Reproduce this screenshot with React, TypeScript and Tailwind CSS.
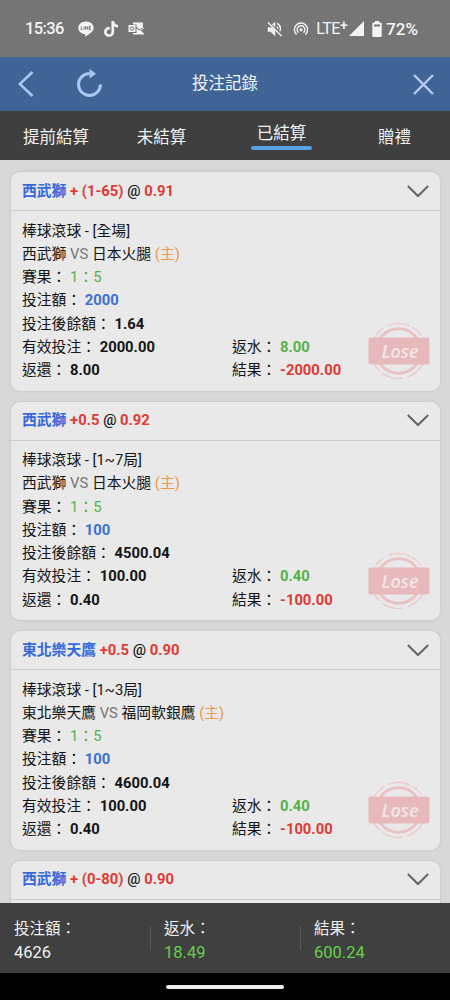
import React from 'react';
import { FaTiktok } from 'react-icons/fa6';

interface BetDetail {
  scope: string;
  away: string;
  amount: string;
  balance: string;
  valid: string;
  returned: string;
  rebate: string;
  result: string;
}

interface Bet {
  team: string;
  line: string;
  odds: string;
  detail?: BetDetail;
}

const bets: Bet[] = [
  {
    team: '西武獅', line: '+ (1-65)', odds: '0.91',
    detail: {
      scope: '全場', away: '日本火腿', amount: '2000', balance: '1.64',
      valid: '2000.00', returned: '8.00', rebate: '8.00', result: '-2000.00'
    }
  },
  {
    team: '西武獅', line: '+0.5', odds: '0.92',
    detail: {
      scope: '1~7局', away: '日本火腿', amount: '100', balance: '4500.04',
      valid: '100.00', returned: '0.40', rebate: '0.40', result: '-100.00'
    }
  },
  {
    team: '東北樂天鷹', line: '+0.5', odds: '0.90',
    detail: {
      scope: '1~3局', away: '福岡軟銀鷹', amount: '100', balance: '4600.04',
      valid: '100.00', returned: '0.40', rebate: '0.40', result: '-100.00'
    }
  },
  { team: '西武獅', line: '+ (0-80)', odds: '0.90' }
];

const StatusBar: React.FC = () => (
  <div className="h-[57px] shrink-0 bg-[#757575] flex items-center justify-between pl-[25px] pr-[32px] text-[#f4f4f4]">
    <div className="flex items-center">
      <span className="w-[53px] text-[16.500px] leading-5 font-medium tracking-[-0.600px]">15:36</span>
      {/* LINE */}
      <svg width="16" height="16" viewBox="0 0 16 16">
        <path d="M8 .5C3.700.5.3 3.300.3 6.900c0 3.100 2.800 5.700 6.400 6.200.8.2.3 1.300.3 2.400 1-.3 5.100-2.800 7-5 1.200-1.200 1.700-2.300 1.700-3.600C15.700 3.300 12.300.5 8 .5z" fill="currentColor" />
        <path d="M3.300 5.300v3.300h1.500M6.200 5.300v3.300M7.700 8.600V5.300l2 3.300V5.300M13 5.300h-1.700v3.300H13M11.300 7H13" fill="none" stroke="#757575" strokeWidth=".9" />
      </svg>
      <FaTiktok className="ml-[9px]" size={16} />
      {/* Outlook */}
      <svg className="ml-[9px]" width="17" height="14" viewBox="0 0 17 14">
        <path d="M5 .5h10v4.700l-3.500 2.300L8.500 5V2.500H5zM.5 3h7v7h-7zM8.500 6.500l3 2 4.500-3v1l-3.300 2 3.300 3v1H5v-1.500h3.500z" fill="currentColor" />
        <circle cx="4" cy="6.500" r="1.700" fill="none" stroke="#757575" strokeWidth="1" />
      </svg>
    </div>
    <div className="flex items-center">
      {/* muted */}
      <svg width="16" height="16" viewBox="0 0 16 16" fill="none" stroke="currentColor" strokeWidth="1.400">
        <path d="M1.500 6v4h2.300l3.700 3.500V9M5.500 4l2-1.700v3.500M1 1.500l13.500 13.500M9.800 5.500c.7.500 1 1.300 1 2.200M10 2.500c2 .8 3.400 3 3.400 5.200 0 1-.2 1.800-.6 2.600" />
        <path d="M2 6.500h3l2 2v4l-3-3H2z" fill="currentColor" stroke="none" />
      </svg>
      {/* hotspot */}
      <svg className="ml-[10px]" width="16" height="16" viewBox="0 0 16 16" fill="none" stroke="currentColor" strokeWidth="1.400">
        <path d="M3.600 13.500a6.600 6.600 0 1 1 8.800 0M5.500 11.600a3.900 3.900 0 1 1 5 0" />
        <circle cx="8" cy="8.800" r="1.600" fill="currentColor" stroke="none" />
      </svg>
      <span className="ml-[7px] w-[31px] text-[16px] leading-5 whitespace-nowrap tracking-[-0.400px]">
        LTE<span className="relative -top-1 text-[14px] leading-none font-medium">+</span>
      </span>
      <svg className="ml-[2px]" width="15" height="15" viewBox="0 0 15 15" fill="currentColor">
        <path d="M0 15 15 0v15z" />
      </svg>
      <svg className="ml-[8px]" width="10" height="16" viewBox="0 0 10 16">
        <path d="M3 0h4v1.500h1.500q1.200 0 1.200 1.200v12q0 1.200-1.200 1.200h-7Q.3 15.900.3 14.700v-12q0-1.200 1.200-1.200H3z" fill="currentColor" />
        <path d="M2 3.500h6v2H2z" fill="#757575" />
      </svg>
      <span className="ml-[4px] text-[17px] leading-5 font-medium">72%</span>
    </div>
  </div>
);

const LoseStamp: React.FC = () => (
  <svg width="62" height="58" viewBox="0 0 62 58">
    <circle cx="30.500" cy="29" r="27.500" fill="none" stroke="#edc3c5" strokeWidth="1.200" strokeDasharray="34 5 22 3 12 4" />
    <circle cx="30.500" cy="29" r="22.300" fill="none" stroke="#ecbfc1" strokeWidth="2.800" />
    <rect x=".5" y="15.500" width="61" height="27" rx="2" fill="#e8b9bc" />
    <text x="13.500" y="35.800" textLength="37" lengthAdjust="spacingAndGlyphs" fill="#f1e6e7" className="font-['Open_Sans','Noto_Sans',sans-serif] text-[18px] font-semibold italic">Lose</text>
  </svg>
);

const BetBody: React.FC<{ team: string; detail: BetDetail }> = ({ team, detail }) => (
  <div className="relative pl-[11px] pt-[8.500px] leading-[23.300px] text-[#151515]">
    <div>棒球滾球 - [{detail.scope}]</div>
    <div>
      {team} <span className="text-[#777]">VS</span> {detail.away} <span className="text-[#e99a49]">(主)</span>
    </div>
    <div>賽果： <span className="text-[#56b146]">1：5</span></div>
    <div>投注額： <b className="text-[#3d70d3]">{detail.amount}</b></div>
    <div>投注後餘額： <b>{detail.balance}</b></div>
    <div className="flex">
      <div className="w-[210px]">有效投注： <b>{detail.valid}</b></div>
      <div>返水： <b className="text-[#56b146]">{detail.rebate}</b></div>
    </div>
    <div className="flex">
      <div className="w-[210px]">返還： <b>{detail.returned}</b></div>
      <div>結果： <b className="text-[#df3a35]">{detail.result}</b></div>
    </div>
    <div className="absolute right-[10px] top-[111px]">
      <LoseStamp />
    </div>
  </div>
);

const BetCard: React.FC<{ bet: Bet }> = ({ bet }) => (
  <div className="h-[218.500px] shrink-0 rounded-[9px] bg-[#e9e9e9] shadow-[0_0_3px_rgba(0,0,0,0.12)]">
    <div className="h-[39px] border-b border-[#cdcdcd] flex items-center justify-between px-[11px]">
      <div className="font-bold text-[#df3a35]">
        <span className="text-[#3568dc]">{bet.team}</span> {bet.line}{' '}
        <span className="font-medium text-[#161616]">@</span> {bet.odds}
      </div>
      <svg width="22" height="13" viewBox="0 0 22 13" fill="none" stroke="#656565" strokeWidth="2">
        <path d="M.8 1 11 11 21.200 1" />
      </svg>
    </div>
    {bet.detail && <BetBody team={bet.team} detail={bet.detail} />}
  </div>
);

const App: React.FC = () => {
  return (
    <div className="w-[450px] h-[1000px] flex flex-col overflow-hidden bg-[#d8d8d8] font-[Roboto,'Noto_Sans_CJK_TC',sans-serif]">
      <StatusBar />

      <header className="h-[54px] shrink-0 bg-[#416497] flex items-center justify-between pl-[18px] pr-[16px]">
        <div className="flex items-center w-[120px]">
          <svg width="16" height="26" viewBox="0 0 16 26" fill="none" stroke="#a9c8f2" strokeWidth="2.500">
            <path d="M14.500 1 1.800 13l12.700 12" />
          </svg>
          <svg className="ml-[42px] mb-[3px]" width="27" height="28" viewBox="0 0 27 28">
            <path d="M13.500 4.500A11 11 0 1 0 24.500 15.500" fill="none" stroke="#a9c8f2" strokeWidth="3" />
            <path d="M13.500 0v9.500L20 4.800z" fill="#a9c8f2" />
          </svg>
        </div>
        <h1 className="pt-[1px] text-[16.500px] text-[#f3f6fa]">投注記錄</h1>
        <div className="w-[122px] flex justify-end">
          <svg width="21" height="21" viewBox="0 0 21 21" fill="none" stroke="#b5cdf0" strokeWidth="2.400">
            <path d="m1 1 19 19M20 1 1 20" />
          </svg>
        </div>
      </header>

      <nav className="h-[49px] shrink-0 bg-[#3f3f3f] flex text-center text-[16.500px] leading-[53px] text-[#f1f1f1]">
        <div className="w-[112px]">提前結算</div>
        <div className="w-[99px]">未結算</div>
        <div className="w-[141px] flex flex-col items-center pt-[11px]">
          <span className="leading-[24px]">已結算</span>
          <span className="w-[61px] h-[4px] rounded-full bg-[#57a2e5]"></span>
        </div>
        <div className="w-[85px]">贈禮</div>
      </nav>

      <main className="h-[743px] shrink-0 overflow-hidden flex flex-col gap-[11px] pl-[11px] pr-[10px] pt-[12px] text-[14.800px]">
        {bets.map((bet, index) => (
          <BetCard key={index} bet={bet} />
        ))}
      </main>

      <footer className="h-[70px] shrink-0 bg-[#404040] flex items-center text-[16.500px] leading-[23px] text-[#f1f1f1]">
        <div className="w-[150px] pl-[14px] pt-[5px]">
          <div className="text-[15.500px]">投注額：</div>
          <div>4626</div>
        </div>
        <div className="w-px h-[24px] bg-[#5a5a5a]"></div>
        <div className="w-[149px] pl-[13px] pt-[5px]">
          <div className="text-[15.500px]">返水：</div>
          <div className="text-[#62d149]">18.49</div>
        </div>
        <div className="w-px h-[24px] bg-[#5a5a5a]"></div>
        <div className="pl-[13px] pt-[5px]">
          <div className="text-[15.500px]">結果：</div>
          <div className="text-[#62d149]">600.24</div>
        </div>
      </footer>

      <div className="h-[27px] shrink-0 bg-black flex justify-center">
        <div className="mt-[12px] w-[118px] h-[4px] rounded-full bg-[#eee]"></div>
      </div>
    </div>
  );
};

export default App;
